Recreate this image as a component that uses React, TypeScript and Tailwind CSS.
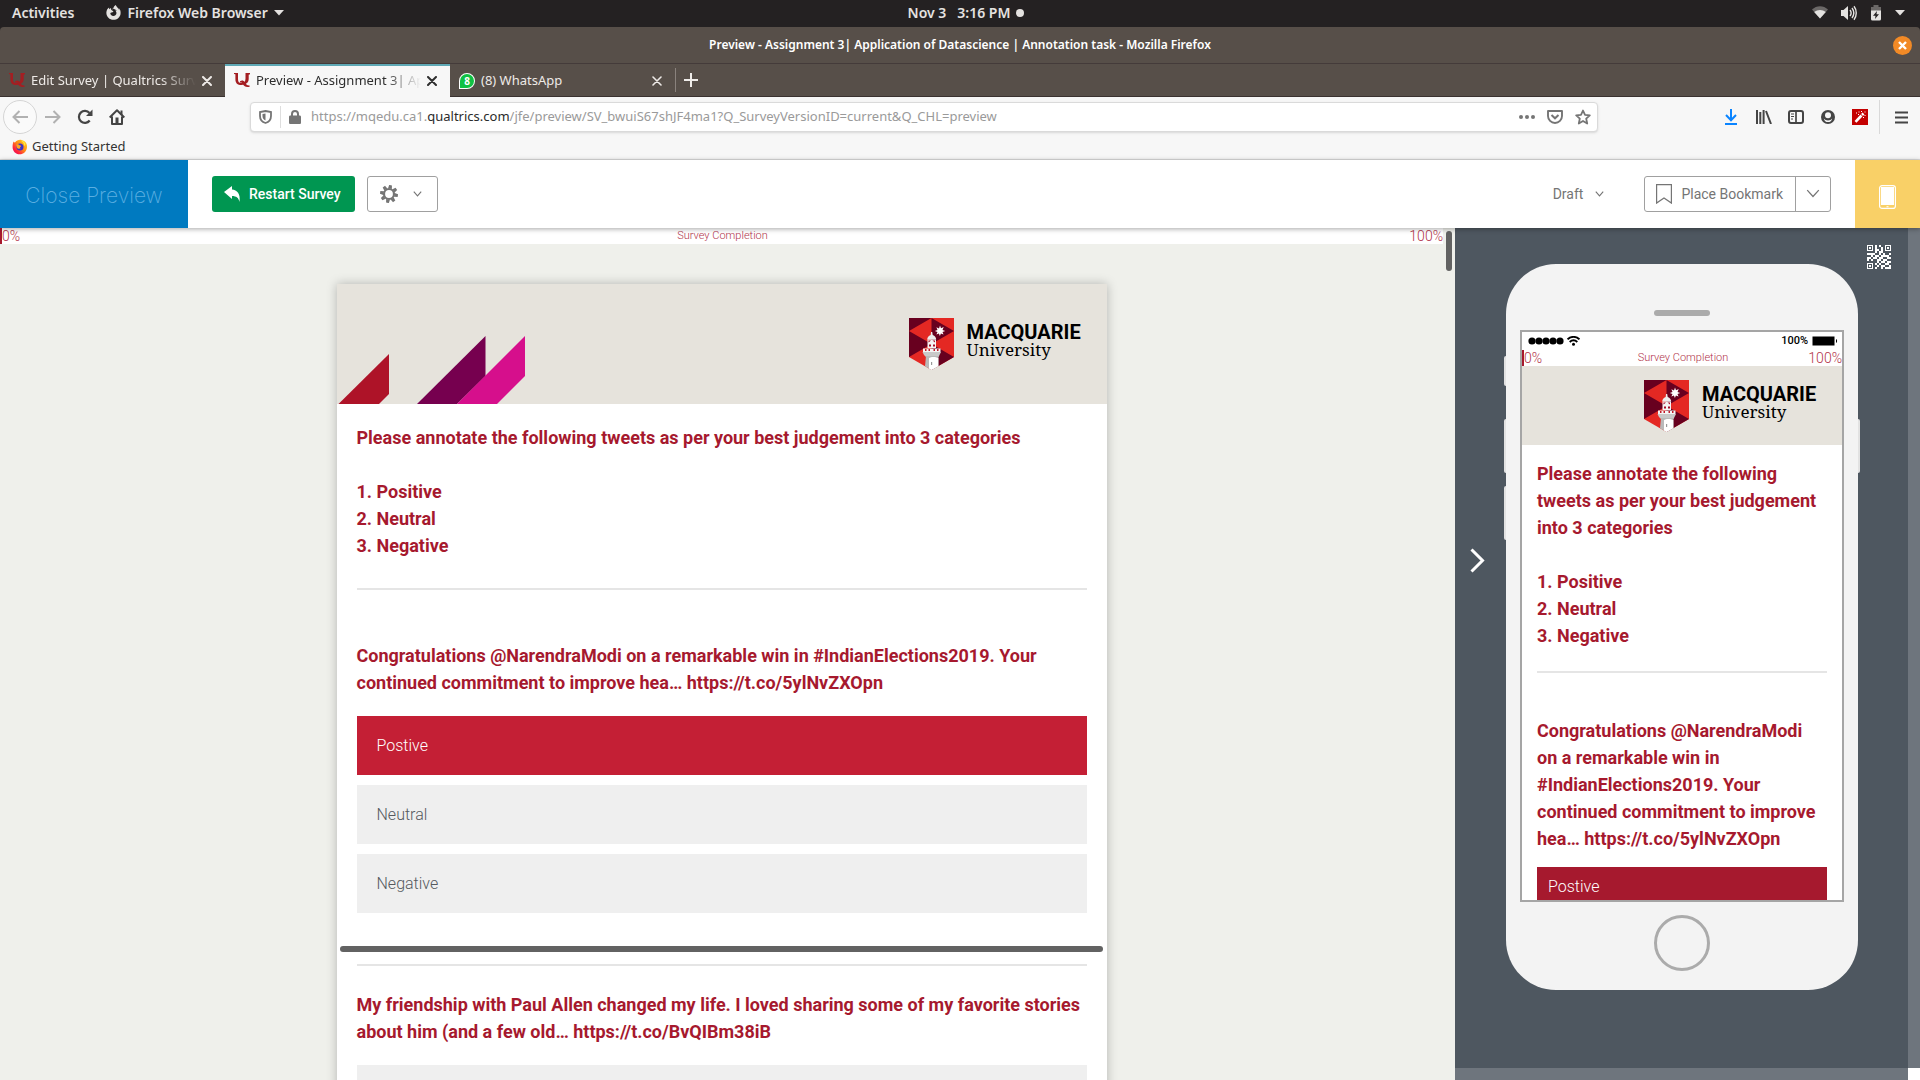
import type { ReactNode } from "react";
import { FaFirefoxBrowser } from "react-icons/fa6";

const UI_FONT = "font-['Noto_Sans','Open_Sans',sans-serif]";

function QualtricsIcon() {
  return (
    <svg width="16" height="15" viewBox="0 0 16 15" aria-hidden="true" className="shrink-0">
      <path d="M0 0h4v6c0 3 1.200 4 3.200 4 3 0 4.300-1.500 4.300-4.500V0H16v1.200l-1.300.6v4c0 4-3 6.200-7.300 6.200-4 0-6-1.800-6-5.800V1.300L0 1z" fill="#a41e22" />
      <path d="M6 8.300c2-1.300 3.600-.8 4.600.7 1.200 2 2.400 3.700 5 3.500v1.300c-3.400.9-5.300-.3-6.600-2.500C8.200 9.900 7.500 9.300 6 9.600z" fill="#a41e22" />
    </svg>
  );
}

function WhatsAppIcon() {
  return (
    <span className="grid size-4 shrink-0 place-items-center rounded-full rounded-bl-sm border border-white bg-[#0fc143] text-[10px] leading-none font-bold text-white">
      8
    </span>
  );
}

function FirefoxColorIcon() {
  return (
    <svg width="16" height="16" viewBox="0 0 16 16" aria-hidden="true">
      <defs>
        <linearGradient id="fox" x1="1" y1="0" x2="0" y2="1">
          <stop offset="0" stopColor="#ffe226" />
          <stop offset=".45" stopColor="#ff8a16" />
          <stop offset=".75" stopColor="#ff1f3d" />
          <stop offset="1" stopColor="#d6106e" />
        </linearGradient>
      </defs>
      <path d="M1.500 2.500C2 3 2.500 3.400 3 3.600 4.500 1.500 7 .5 9.500 1c4 .7 6 4 5.500 7.500-.5 4-3.500 6.800-7.300 6.800C3.500 15.300.5 12 .6 8c0-2 .3-4 .9-5.500z" fill="url(#fox)" />
      <circle cx="8" cy="8" r="3.500" fill="#3b32c4" />
      <path d="M4.500 5.500c1.500-.5 2.700 0 3.400.9 1.500 0 1.700.6.6 1.300-.8.5-.6 1.300.3 1.400-1.300 1.100-3.300.8-3.900-.6-.4-1-.6-2-.4-3z" fill="#ffa51f" />
      <path d="M9 1.500c1 1.200 3.500 2.500 3.300 5.500 1-.6 1-1.500 1-2.200C12.500 3 11 1.800 9 1.500z" fill="#ffee3d" />
    </svg>
  );
}

function CloseIcon({ bold }: { bold?: boolean }) {
  return (
    <svg width="10" height="10" viewBox="0 0 10 10" aria-hidden="true">
      <path d="M1 1l8 8M9 1L1 9" stroke="currentColor" strokeWidth={bold ? 2 : 1.6} strokeLinecap="round" />
    </svg>
  );
}

function Chevron({ width = 9 }: { width?: number }) {
  return (
    <svg width={width} height={width * 0.66} viewBox="0 0 12 8" aria-hidden="true">
      <path d="M1 1l5 5.500L11 1" fill="none" stroke="currentColor" strokeWidth={width > 10 ? 1.1 : 1.5} />
    </svg>
  );
}

function Caret() {
  return (
    <svg width="10" height="6" viewBox="0 0 10 6" aria-hidden="true">
      <path d="M0 0h10L5 5.500z" fill="currentColor" />
    </svg>
  );
}

function SystemBar() {
  return (
    <header className="grid h-[27px] shrink-0 grid-cols-3 items-center bg-[#242122] px-3 pb-0.5 text-sm font-semibold text-[#e4e2e0]">
      <div className="flex items-center gap-8">
        <button type="button">Activities</button>
        <button type="button" className="flex items-center gap-1.5">
          <FaFirefoxBrowser size={15} />
          Firefox Web Browser
          <Caret />
        </button>
      </div>
      <div className="flex items-center justify-center gap-1.5 pl-3">
        <span className="whitespace-pre">Nov 3{"   "}3:16 PM</span>
        <span className="size-2 rounded-full bg-current" />
      </div>
      <div className="flex items-center justify-end gap-[13px] pr-[3px]">
        <svg width="16" height="13" viewBox="0 0 16 13" aria-label="Wi-Fi">
          <path d="M0 3.500C4.500-1 11.500-1 16 3.500L8 12.500z" fill="#6b6867" />
          <path d="M2.200 6C5.500 3.200 10.500 3.200 13.800 6L8 12.500z" fill="#e4e2e0" />
        </svg>
        <svg width="16" height="16" viewBox="0 0 16 16" aria-label="Volume">
          <path d="M0 5h2.500L7 1v14L2.500 11H0z" fill="currentColor" />
          <path d="M9 5c1.300 1.700 1.300 4.300 0 6M11 3c2.200 3 2.200 7 0 10M13 1.300c3 3.900 3 9.500 0 13.400" fill="none" stroke="currentColor" strokeWidth="1.400" />
        </svg>
        <svg width="12" height="16" viewBox="0 0 12 16" aria-label="Battery">
          <path d="M3.500 0h5v2H11v4H1V2h2.500z" fill="#6b6867" />
          <path d="M1 5.500h10V14a1.500 1.500 0 0 1-1.500 1.500h-7A1.500 1.500 0 0 1 1 14z" fill="#e4e2e0" />
          <path d="M7 6l-4 4.800h2.500L5 14l4-4.700H6.500z" fill="#242122" />
        </svg>
        <Caret />
      </div>
    </header>
  );
}

function TitleBar() {
  return (
    <div className="bg-[#242122]">
      <div className="grid h-[37px] grid-cols-[1fr_auto_1fr] items-center rounded-t-[4px] border-b border-[#443b3a] bg-[#574f49] px-2">
        <h1 className="col-start-2 text-xs font-semibold text-white">
          Preview - Assignment 3| Application of Datascience | Annotation task - Mozilla Firefox
        </h1>
        <button
          type="button"
          aria-label="Close window"
          className="grid size-[19px] place-items-center justify-self-end rounded-full bg-[#f28a26] text-white"
        >
          <svg width="9" height="9" viewBox="0 0 9 9" aria-hidden="true">
            <path d="M1 1l7 7M8 1L1 8" stroke="currentColor" strokeWidth="2.400" />
          </svg>
        </button>
      </div>
    </div>
  );
}

function Tab({ icon, title, active, last }: { icon: ReactNode; title: string; active?: boolean; last?: boolean }) {
  return (
    <div
      className={
        active
          ? "flex h-full w-[225px] items-center gap-1.5 border-t-2 border-[#5fa9b5] bg-[#f7f7f7] pr-[13px] pb-0.5 pl-[9px] text-[#2e2e2e]"
          : "flex h-full w-[225px] items-center gap-1.5 border-t-2 border-transparent pr-[13px] pb-0.5 pl-[9px] text-[#eeeae7]"
      }
    >
      {icon}
      <span
        className={
          last
            ? "min-w-0 flex-1 overflow-hidden whitespace-nowrap"
            : "min-w-0 flex-1 overflow-hidden whitespace-nowrap [mask-image:linear-gradient(to_right,black_78%,transparent)]"
        }
      >
        {title}
      </span>
      <button type="button" aria-label="Close tab">
        <CloseIcon bold={!last} />
      </button>
    </div>
  );
}

function TabStrip() {
  return (
    <nav className="flex h-[33px] shrink-0 items-center border-b border-[#3a3230] bg-[#574f49] text-[13px]">
      <div className="-mb-px flex h-[33px]">
        <Tab icon={<QualtricsIcon />} title="Edit Survey | Qualtrics Surv" />
        <Tab icon={<QualtricsIcon />} title="Preview - Assignment 3| Ap" active />
        <Tab icon={<WhatsAppIcon />} title="(8) WhatsApp" last />
      </div>
      <div className="h-6 w-px bg-[#8a827d]" />
      <button type="button" aria-label="New tab" className="ml-2 text-[#f0edea]">
        <svg width="14" height="14" viewBox="0 0 14 14" aria-hidden="true">
          <path d="M7 0v14M0 7h14" stroke="currentColor" strokeWidth="2" />
        </svg>
      </button>
    </nav>
  );
}

function NavBar() {
  return (
    <div className="shrink-0 border-b border-[#dcdcdc] bg-[#f7f7f7] text-[13px] text-[#333]">
      <div className="flex h-10 items-center pr-3 pl-[3px] text-[#454545]">
        <button
          type="button"
          aria-label="Back"
          className="grid size-[34px] place-items-center rounded-full border border-[#d5d5d5] bg-[#fafafa] text-[#b1b1b1]"
        >
          <svg width="16" height="14" viewBox="0 0 16 14" aria-hidden="true">
            <path d="M16 7H1.500M7.500 1l-6 6 6 6" fill="none" stroke="currentColor" strokeWidth="2" />
          </svg>
        </button>
        <button type="button" aria-label="Forward" className="ml-2 text-[#b1b1b1]">
          <svg width="16" height="14" viewBox="0 0 16 14" aria-hidden="true">
            <path d="M0 7h14.500M8.500 1l6 6-6 6" fill="none" stroke="currentColor" strokeWidth="2" />
          </svg>
        </button>
        <button type="button" aria-label="Reload" className="ml-4">
          <svg width="16" height="16" viewBox="0 0 16 16" aria-hidden="true">
            <path d="M12.700 11.500A6 6 0 1 1 12.500 4" fill="none" stroke="currentColor" strokeWidth="2.200" />
            <path d="M15.500 .5V7H9z" fill="currentColor" />
          </svg>
        </button>
        <button type="button" aria-label="Home" className="ml-4">
          <svg width="16" height="16" viewBox="0 0 16 16" aria-hidden="true">
            <path d="M.7 8.500L8 1.300l7.300 7.200M3 7.500v7.400h10V7.500" fill="none" stroke="currentColor" strokeWidth="2" strokeLinejoin="round" />
            <path d="M6.500 8.500h3V15h-3zM11.500 1.500h2V6h-2z" fill="currentColor" />
          </svg>
        </button>
        <div className="ml-[125px] flex h-[30px] flex-1 items-center rounded border border-[#dadada] bg-white pr-1.5 pl-2 text-[#757575] shadow-sm">
          <svg width="13" height="14" viewBox="0 0 13 14" aria-hidden="true">
            <path d="M6.500 1L12 2v4c0 3.500-2 6-5.500 7C3 12 1 9.500 1 6V2z" fill="none" stroke="currentColor" strokeWidth="1.800" />
            <path d="M6.500 3.500v7C4.500 9.500 3.500 8 3.500 6V4z" fill="currentColor" />
          </svg>
          <div className="mx-2 h-[22px] w-px bg-[#dedede]" />
          <svg width="12" height="14" viewBox="0 0 12 14" aria-hidden="true">
            <path d="M1.300 5.500h9.400c.7 0 1.300.6 1.300 1.300v5.900c0 .7-.6 1.300-1.300 1.300H1.300C.6 14 0 13.400 0 12.700V6.800c0-.7.600-1.300 1.300-1.300z" fill="currentColor" />
            <path d="M3 6V4a3 3 0 0 1 6 0v2" fill="none" stroke="currentColor" strokeWidth="2" />
          </svg>
          <div className="ml-2.5 min-w-0 flex-1 overflow-hidden whitespace-nowrap text-[#9a9a9a]">
            https://mqedu.ca1.<span className="text-[#2b2b2b]">qualtrics.com</span>
            /jfe/preview/SV_bwuiS67shJF4ma1?Q_SurveyVersionID=current&amp;Q_CHL=preview
          </div>
          <button type="button" aria-label="Page actions" className="flex gap-0.5">
            <span className="size-1 rounded-full bg-current" />
            <span className="size-1 rounded-full bg-current" />
            <span className="size-1 rounded-full bg-current" />
          </button>
          <button type="button" aria-label="Save to Pocket" className="ml-3">
            <svg width="16" height="14" viewBox="0 0 16 14" aria-hidden="true">
              <path d="M1 1h14v5a7 7 0 0 1-14 0z" fill="none" stroke="currentColor" strokeWidth="1.900" strokeLinejoin="round" />
              <path d="M4.500 5L8 8.300 11.500 5" fill="none" stroke="currentColor" strokeWidth="2" />
            </svg>
          </button>
          <button type="button" aria-label="Bookmark this page" className="ml-3">
            <svg width="16" height="16" viewBox="0 0 16 16" aria-hidden="true">
              <path d="M8 1.500l2 4.400 4.800.5-3.600 3.200 1 4.900L8 12l-4.200 2.500 1-4.900L1.200 6.400 6 5.900z" fill="none" stroke="currentColor" strokeWidth="1.800" strokeLinejoin="round" />
            </svg>
          </button>
        </div>
        <button type="button" aria-label="Downloads" className="ml-[127px] text-[#0a84ff]">
          <svg width="12" height="16" viewBox="0 0 12 16" aria-hidden="true">
            <path d="M6 0v11M1 6l5 5.200L11 6M0 15h12" fill="none" stroke="currentColor" strokeWidth="2" />
          </svg>
        </button>
        <button type="button" aria-label="Library" className="ml-[19px]">
          <svg width="16" height="14" viewBox="0 0 16 14" aria-hidden="true">
            <path d="M1 0v14M4.300 2v12M7.600 0v14M10 1l5 13" fill="none" stroke="currentColor" strokeWidth="2" />
          </svg>
        </button>
        <button type="button" aria-label="Sidebars" className="ml-4">
          <svg width="16" height="14" viewBox="0 0 16 14" aria-hidden="true">
            <rect x="1" y="1" width="14" height="12" rx="2" fill="none" stroke="currentColor" strokeWidth="2" />
            <path d="M8 1v12" stroke="currentColor" strokeWidth="1.700" />
            <path d="M3 4h3M3 6.500h3M3 9h2" stroke="currentColor" strokeWidth="1.200" />
          </svg>
        </button>
        <button type="button" aria-label="Account" className="ml-4">
          <svg width="16" height="16" viewBox="0 0 16 16" aria-hidden="true">
            <circle cx="8" cy="8" r="7" fill="currentColor" />
            <circle cx="8" cy="6.300" r="3" fill="#f7f7f7" />
            <path d="M3.800 9.500c.4 2.500 2 3.600 4.200 3.600s3.800-1.100 4.200-3.600c-1 1.300-2.300 2-4.200 2s-3.200-.7-4.200-2z" fill="#f7f7f7" />
          </svg>
        </button>
        <button type="button" aria-label="Extension" className="ml-4">
          <svg width="16" height="16" viewBox="0 0 16 16" aria-hidden="true">
            <path d="M0 0h16v16H0z" fill="#c40000" />
            <path d="M3.500 12.800L9.500 6.500" stroke="#fff" strokeWidth="2.600" />
            <path d="M10 6l1.500-1.500" stroke="#fff" strokeWidth="2.600" />
            <path d="M4 4h1M6.500 3h1M6 5.500h1M9 2.500h1M12.500 3h1M12.500 6.500h1M11 8.500h1" stroke="#fff" />
          </svg>
        </button>
        <div className="ml-[11px] h-[34px] w-px bg-[#d9d9d9]" />
        <button type="button" aria-label="Menu" className="ml-[15px]">
          <svg width="13" height="13" viewBox="0 0 13 13" aria-hidden="true">
            <path d="M0 1.500h13M0 6.500h13M0 11.500h13" stroke="currentColor" strokeWidth="2" />
          </svg>
        </button>
      </div>
      <div className="flex h-[22px] items-start pl-3">
        <a href="#getting-started" className="flex items-center gap-1">
          <FirefoxColorIcon />
          Getting Started
        </a>
      </div>
    </div>
  );
}

const GEAR_TEETH = [0, 45, 90, 135, 180, 225, 270, 315];

function PreviewToolbar() {
  return (
    <div className="relative z-10 flex h-[68px] shrink-0 items-center bg-white font-['Roboto',sans-serif] text-sm text-[#757575] shadow-[0_1px_5px_rgba(0,0,0,0.35)]">
      <button
        type="button"
        className="h-full w-[188px] bg-[#007ac0] pt-1 font-['Inter',sans-serif] text-[21px] font-extralight text-[#5aaee0]"
      >
        Close Preview
      </button>
      <button
        type="button"
        className="ml-6 flex h-9 items-center gap-2 rounded-[3px] bg-[#009651] pr-3.5 pl-3 font-medium text-white"
      >
        <svg width="17" height="17" viewBox="0 0 17 17" aria-hidden="true">
          <path d="M0 6L8 0v3.500c5 .3 8.800 4.200 7.500 12.500-.8-4-3-6-7.500-6v3z" fill="currentColor" />
        </svg>
        Restart Survey
      </button>
      <button
        type="button"
        aria-label="Preview settings"
        className="ml-3 flex h-9 w-[71px] items-center justify-between rounded-[3px] border border-[#a0a0a0] pr-[15px] pl-3"
      >
        <svg width="18" height="18" viewBox="0 0 18 18" aria-hidden="true">
          <circle cx="9" cy="9" r="5" fill="none" stroke="currentColor" strokeWidth="2.200" />
          {GEAR_TEETH.map((a) => (
            <path key={a} d="M7.600 0h2.800l.5 3.500H7.100z" fill="currentColor" transform={`rotate(${a + 10} 9 9)`} />
          ))}
        </svg>
        <Chevron />
      </button>
      <button type="button" className="ml-auto flex items-center gap-3">
        Draft
        <Chevron />
      </button>
      <div className="mr-6 ml-10 flex h-9 rounded-[3px] border border-[#a0a0a0]">
        <button type="button" className="flex items-center gap-[9px] pr-3 pl-[11px]">
          <svg width="16" height="20" viewBox="0 0 16 20" aria-hidden="true">
            <path d="M.6.6h14.800v18.500L8 14 .6 19.100z" fill="none" stroke="currentColor" strokeWidth="1.200" />
          </svg>
          Place Bookmark
        </button>
        <button
          type="button"
          aria-label="Bookmark options"
          className="grid w-[35px] place-items-center border-l border-[#a0a0a0]"
        >
          <Chevron width={14} />
        </button>
      </div>
      <button type="button" aria-label="Mobile view" className="grid h-full w-[65px] place-items-center bg-[#f9d067] pt-1.5">
        <svg width="17" height="24" viewBox="0 0 17 24" aria-hidden="true">
          <rect x=".6" y=".6" width="15.800" height="22.800" rx="2.500" fill="none" stroke="#fff" strokeWidth="1.200" />
          <path d="M2 2h13v18H2zM7.500 21.200h2v1h-2z" fill="#fff" />
        </svg>
      </button>
    </div>
  );
}

function Progress() {
  return (
    <div className="grid h-4 grid-cols-3 items-center border-l-2 border-[#a6192e] bg-white text-sm leading-4 font-light text-[#b2334a]">
      <span>0%</span>
      <span className="text-center text-[11px]">Survey Completion</span>
      <span className="text-right">100%</span>
    </div>
  );
}

function UniversityLogo() {
  return (
    <div className="flex gap-[13px]">
      <svg width="45" height="52" viewBox="0 0 45 52" aria-hidden="true">
        <path d="M0 0h45v39L22.500 52 0 39z" fill="#e42823" />
        <path d="M0 0h22.500L0 13zM0 13l22.500 13L0 39zM22.500 0L45 13 22.500 26zM22.500 26L45 39 22.500 52z" fill="#68001f" />
        <path d="M31 7.500l1 2.800 2.700-1.200L33.500 12l2.700 1-2.700 1 1 2.500-2.600-1.100-1 2.600-1-2.600-2.500 1.100 1.100-2.500-2.700-1 2.700-1-1.100-2.700 2.600 1.100z" fill="#fff" />
        <path d="M22 14h1.200l.5 3c2.200.8 3.300 2.500 3.500 4.500h-9c.2-2 1.300-3.700 3.500-4.500z" fill="#ededed" />
        <path d="M18.500 21.500h8.500v8.500h-8.500z" fill="#f5f5f5" />
        <path d="M19.500 22.500h2.500l-2.500 2zM26 22.500h-2.500l2.500 2zM20 26.500h2v2h-2zM24 26.500h2v2h-2z" fill="#a30c26" />
        <path d="M14 30.500h17.500V34H14z" fill="#f5f5f5" />
        <path d="M16 31h1.500v2H16zM19.500 31H21v2h-1.500zM24.500 31H26v2h-1.500zM28 31h1.500v2H28z" fill="#c01a2a" />
        <path d="M13.500 34h18.500l-1.500 3-1 2H17l-2-2z" fill="#c9c9c9" />
        <path d="M17 38h12.500v10L22.500 52l-6.500-3.800z" fill="#b9b9b9" />
        <path d="M20 40c2-1.500 6.500-1.500 9.300 0v8.200L22.500 52 20 50.600z" fill="#fff" />
        <path d="M22 44h1.200v3H22z" fill="#999" />
      </svg>
      <div className="w-[116px] pt-1 text-black">
        <div className="text-xl leading-5 font-bold">MACQUARIE</div>
        <div className="font-['Noto_Serif','Liberation_Serif',serif] text-[17px] leading-4 whitespace-nowrap">University</div>
      </div>
    </div>
  );
}

const INTRO = "Please annotate the following tweets as per your best judgement into 3 categories";
const CATEGORIES = ["1. Positive", "2. Neutral", "3. Negative"];
const TWEET_1 =
  "Congratulations @NarendraModi on a remarkable win in #IndianElections2019. Your continued commitment to improve hea… https://t.co/5ylNvZXOpn";
const TWEET_2 =
  "My friendship with Paul Allen changed my life. I loved sharing some of my favorite stories about him (and a few old… https://t.co/BvQIBm38iB";

function Intro() {
  return (
    <div>
      <p>{INTRO}</p>
      <ul className="mt-[27px]">
        {CATEGORIES.map((c) => (
          <li key={c}>{c}</li>
        ))}
      </ul>
    </div>
  );
}

function Choice({ name, label, selected, compact }: { name: string; label: string; selected?: boolean; compact?: boolean }) {
  const tone = selected ? (compact ? "bg-[#a6192e] text-white" : "bg-[#c41f35] text-white") : "bg-[#efefef] text-[#55595e]";
  return (
    <label
      className={`${tone} ${compact ? "h-11 px-[11px] pb-1" : "h-[59px] px-5"} relative flex items-center text-base font-light`}
    >
      <input type="radio" name={name} defaultChecked={selected} className="sr-only" />
      {label}
    </label>
  );
}

function Rule() {
  return <hr className="h-0.5 border-0 bg-[#e5e5e5]" />;
}

function DesktopPreview() {
  return (
    <main className="relative flex-1 overflow-hidden bg-[#eff0eb] pr-3">
      <Progress />
      <article className="mx-auto mt-10 w-[770px] max-w-full bg-white shadow-[0_0_10px_rgba(0,0,0,0.25)]">
        <header className="flex h-[120px] items-start justify-between bg-[#e6e3dc]">
          <svg width="190" height="120" viewBox="0 0 190 120" aria-hidden="true">
            <path d="M1.500 120L52 70v40l-10 10z" fill="#ae1328" />
            <path d="M80 120L148.500 52v40L120 120z" fill="#76004f" />
            <path d="M120 120l68-68v40l-28 28z" fill="#d60f8c" />
          </svg>
          <div className="pt-[34px] pr-6">
            <UniversityLogo />
          </div>
        </header>
        <div className="px-5 pt-5 text-lg leading-[27px] font-bold text-[#a6192e]">
          <Intro />
          <div className="mt-[29px]">
            <Rule />
          </div>
          <p className="mt-[52px]">{TWEET_1}</p>
          <div className="mt-5 flex flex-col gap-2.5">
            <Choice name="tweet-1" label="Postive" selected />
            <Choice name="tweet-1" label="Neutral" />
            <Choice name="tweet-1" label="Negative" />
          </div>
          <div className="-mr-4 -ml-[17px] mt-[33px] h-1.5 rounded-full bg-[#626262]" />
          <div className="mt-3">
            <Rule />
          </div>
          <p className="mt-[25px]">{TWEET_2}</p>
          <div className="mt-5 h-[59px] bg-[#efefef]" />
        </div>
      </article>
      <div className="absolute top-[3px] right-[3px] h-10 w-1.5 rounded-full bg-[#626262]" />
    </main>
  );
}

const QR_ROWS = [
  "111110100111",
  "100010011101",
  "101011010101",
  "100010110111",
  "111100101001",
  "001011011110",
  "110110110011",
  "101001101100",
  "111101011011",
  "100110100110",
  "101101011001",
  "111110010111",
];

function QrCode() {
  return (
    <svg width="24" height="24" viewBox="0 0 24 24" shapeRendering="crispEdges" aria-hidden="true">
      {QR_ROWS.flatMap((row, y) =>
        row.split("").map((c, x) => (c === "1" ? <path key={`${x}-${y}`} d={`M${x * 2} ${y * 2}h2v2h-2z`} fill="#fff" /> : null)),
      )}
      {[
        [0, 0],
        [16, 0],
        [0, 16],
      ].map(([x, y]) => (
        <g key={`${x}-${y}`}>
          <path d={`M${x} ${y}h8v8h-8z`} fill="#4e5760" />
          <path d={`M${x + (x ? 2 : 0)} ${y + (y ? 2 : 0)}h6v6h-6z`} fill="#fff" />
          <path d={`M${x + (x ? 3 : 1)} ${y + (y ? 3 : 1)}h4v4h-4z`} fill="#4e5760" />
          <path d={`M${x + (x ? 4 : 2)} ${y + (y ? 4 : 2)}h2v2h-2z`} fill="#fff" />
        </g>
      ))}
    </svg>
  );
}

function Phone() {
  return (
    <section aria-label="Mobile preview" className="relative mt-9 flex h-[726px] w-[352px] flex-col items-center rounded-[50px] bg-[#f3f3f3] pt-[46px]">
      <span className="absolute top-[92px] -left-0.5 h-[30px] w-0.5 rounded-l bg-[#e2e2e2]" />
      <span className="absolute top-[155px] -left-0.5 h-[54px] w-0.5 rounded-l bg-[#e2e2e2]" />
      <span className="absolute top-[222px] -left-0.5 h-[54px] w-0.5 rounded-l bg-[#e2e2e2]" />
      <span className="absolute top-[155px] -right-0.5 h-[54px] w-0.5 rounded-r bg-[#e2e2e2]" />
      <div className="h-1.5 w-14 rounded-full bg-[#ababab]" />
      <div className="mt-3.5 h-[572px] w-[324px] overflow-hidden border-2 border-[#a5a5a5] bg-white">
        <div className="flex h-[18px] items-center justify-between pr-1 pl-1.5 text-[11px] font-medium text-black">
          <div className="flex items-center gap-0.5">
            <svg width="37" height="8" viewBox="0 0 37 8" aria-label="Signal">
              {[4, 11, 18, 25, 32].map((x) => (
                <circle key={x} cx={x} cy="4" r="3.600" />
              ))}
            </svg>
            <svg width="13" height="10" viewBox="0 0 13 10" aria-label="Wi-Fi">
              <path d="M.5 3.300c3.600-3.200 8.400-3.200 12 0M2.700 5.900c2.300-2 5.300-2 7.600 0" fill="none" stroke="#000" strokeWidth="2" />
              <circle cx="6.500" cy="8.300" r="1.500" />
            </svg>
          </div>
          <div className="flex items-center gap-1">
            100%
            <svg width="26" height="10" viewBox="0 0 26 10" aria-label="Battery">
              <path d="M.5.500h22v9H.500zM24 3c1.500.5 1.500 3.500 0 4z" />
            </svg>
          </div>
        </div>
        <Progress />
        <div className="flex h-[79px] justify-end bg-[#e6e3dc] pt-3.5 pr-6">
          <UniversityLogo />
        </div>
        <div className="px-[15px] pt-[15px] text-lg leading-[27px] font-bold text-[#a6192e]">
          <Intro />
          <div className="mt-[22px]">
            <Rule />
          </div>
          <p className="mt-11 pr-2">{TWEET_1}</p>
          <div className="mt-[15px]">
            <Choice name="phone-tweet-1" label="Postive" selected compact />
          </div>
        </div>
      </div>
      <div className="mt-[13px] size-14 rounded-full border-[3px] border-[#ababab]" />
    </section>
  );
}

function MobilePanel() {
  return (
    <aside className="grid shrink-0 grid-cols-[453px_12px] grid-rows-[1fr_12px] bg-[#6e757d]">
      <div className="relative flex items-start overflow-hidden bg-[#4e5760]">
        <button type="button" aria-label="Collapse mobile preview" className="mt-80 flex w-[51px] pl-[15px] text-white">
          <svg width="15" height="25" viewBox="0 0 15 25" aria-hidden="true">
            <path d="M1.500 1.500L12.500 12.500l-11 11" fill="none" stroke="currentColor" strokeWidth="3" />
          </svg>
        </button>
        <Phone />
        <button type="button" aria-label="Show QR code" className="absolute top-[17px] right-[17px]">
          <QrCode />
        </button>
      </div>
      <div />
      <div />
      <div className="bg-white" />
    </aside>
  );
}

export default function App() {
  return (
    <div className={`${UI_FONT} flex h-screen flex-col overflow-hidden`}>
      <SystemBar />
      <TitleBar />
      <TabStrip />
      <NavBar />
      <PreviewToolbar />
      <div className="flex min-h-0 flex-1 font-['Roboto',sans-serif]">
        <DesktopPreview />
        <MobilePanel />
      </div>
    </div>
  );
}
